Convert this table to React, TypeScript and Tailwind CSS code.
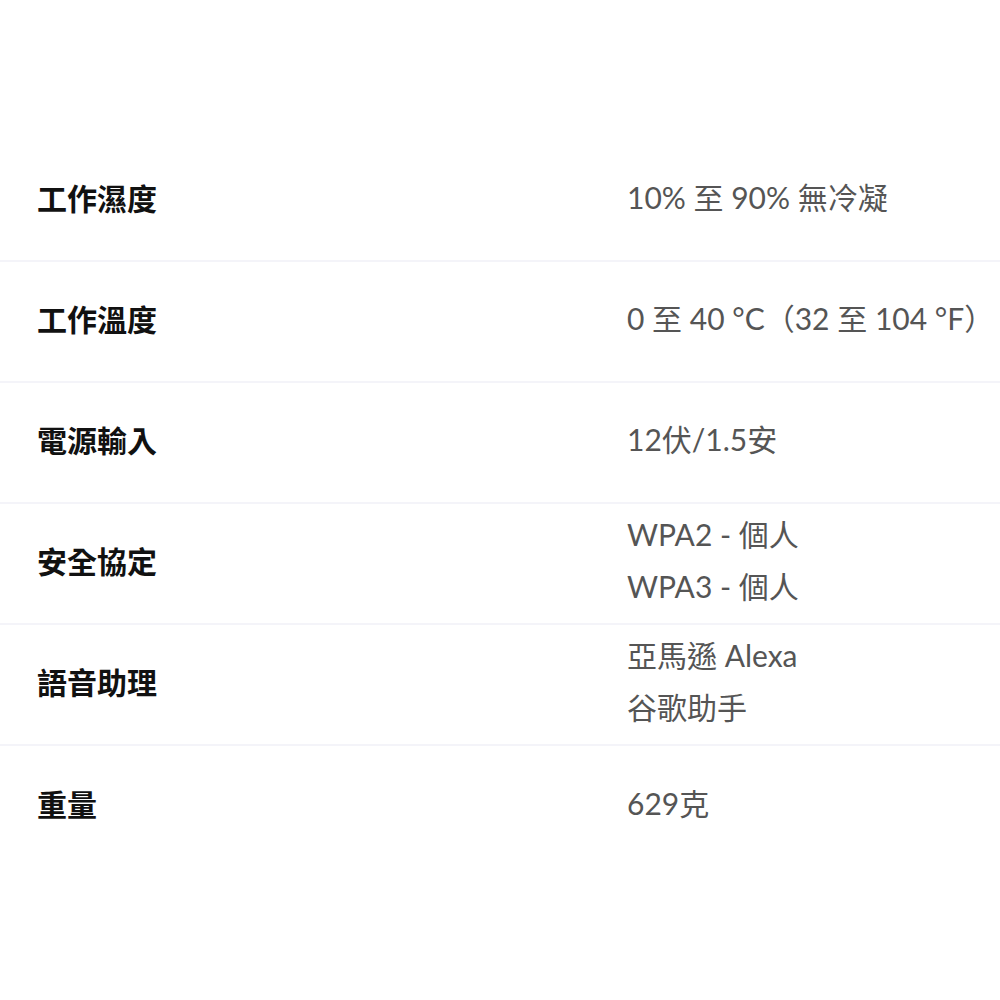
import React from "react";

const rows: { label: string; values: string[] }[] = [
  { label: "工作濕度", values: ["10% 至 90% 無冷凝"] },
  { label: "工作溫度", values: ["0 至 40 °C（32 至 104 °F）"] },
  { label: "電源輸入", values: ["12伏/1.5安"] },
  { label: "安全協定", values: ["WPA2 - 個人", "WPA3 - 個人"] },
  { label: "語音助理", values: ["亞馬遜 Alexa", "谷歌助手"] },
  { label: "重量", values: ["629克"] },
];

export default function App() {
  return (
    <div className="w-[1000px] h-[1000px] bg-white pt-[141px]">
      {rows.map((r, i) => (
        <div
          key={r.label}
          className={`flex items-center h-[121px] pb-[7px] ${i < rows.length - 1 ? "border-b-2 border-[#f4f4f9]" : ""}`}
        >
          <div
            className="w-[627px] pl-[37px] text-[30px] font-bold text-[#111] leading-none"
            style={{ fontFamily: '"Noto Sans CJK TC", "Noto Sans", sans-serif' }}
          >
            {r.label}
          </div>
          <div
            className="flex-1 text-[30px] text-[#555] leading-[52px] whitespace-nowrap"
            style={{ fontFamily: 'Lato, "Noto Sans CJK TC", sans-serif' }}
          >
            {r.values.map((v) => (
              <div key={v}>{v}</div>
            ))}
          </div>
        </div>
      ))}
    </div>
  );
}
